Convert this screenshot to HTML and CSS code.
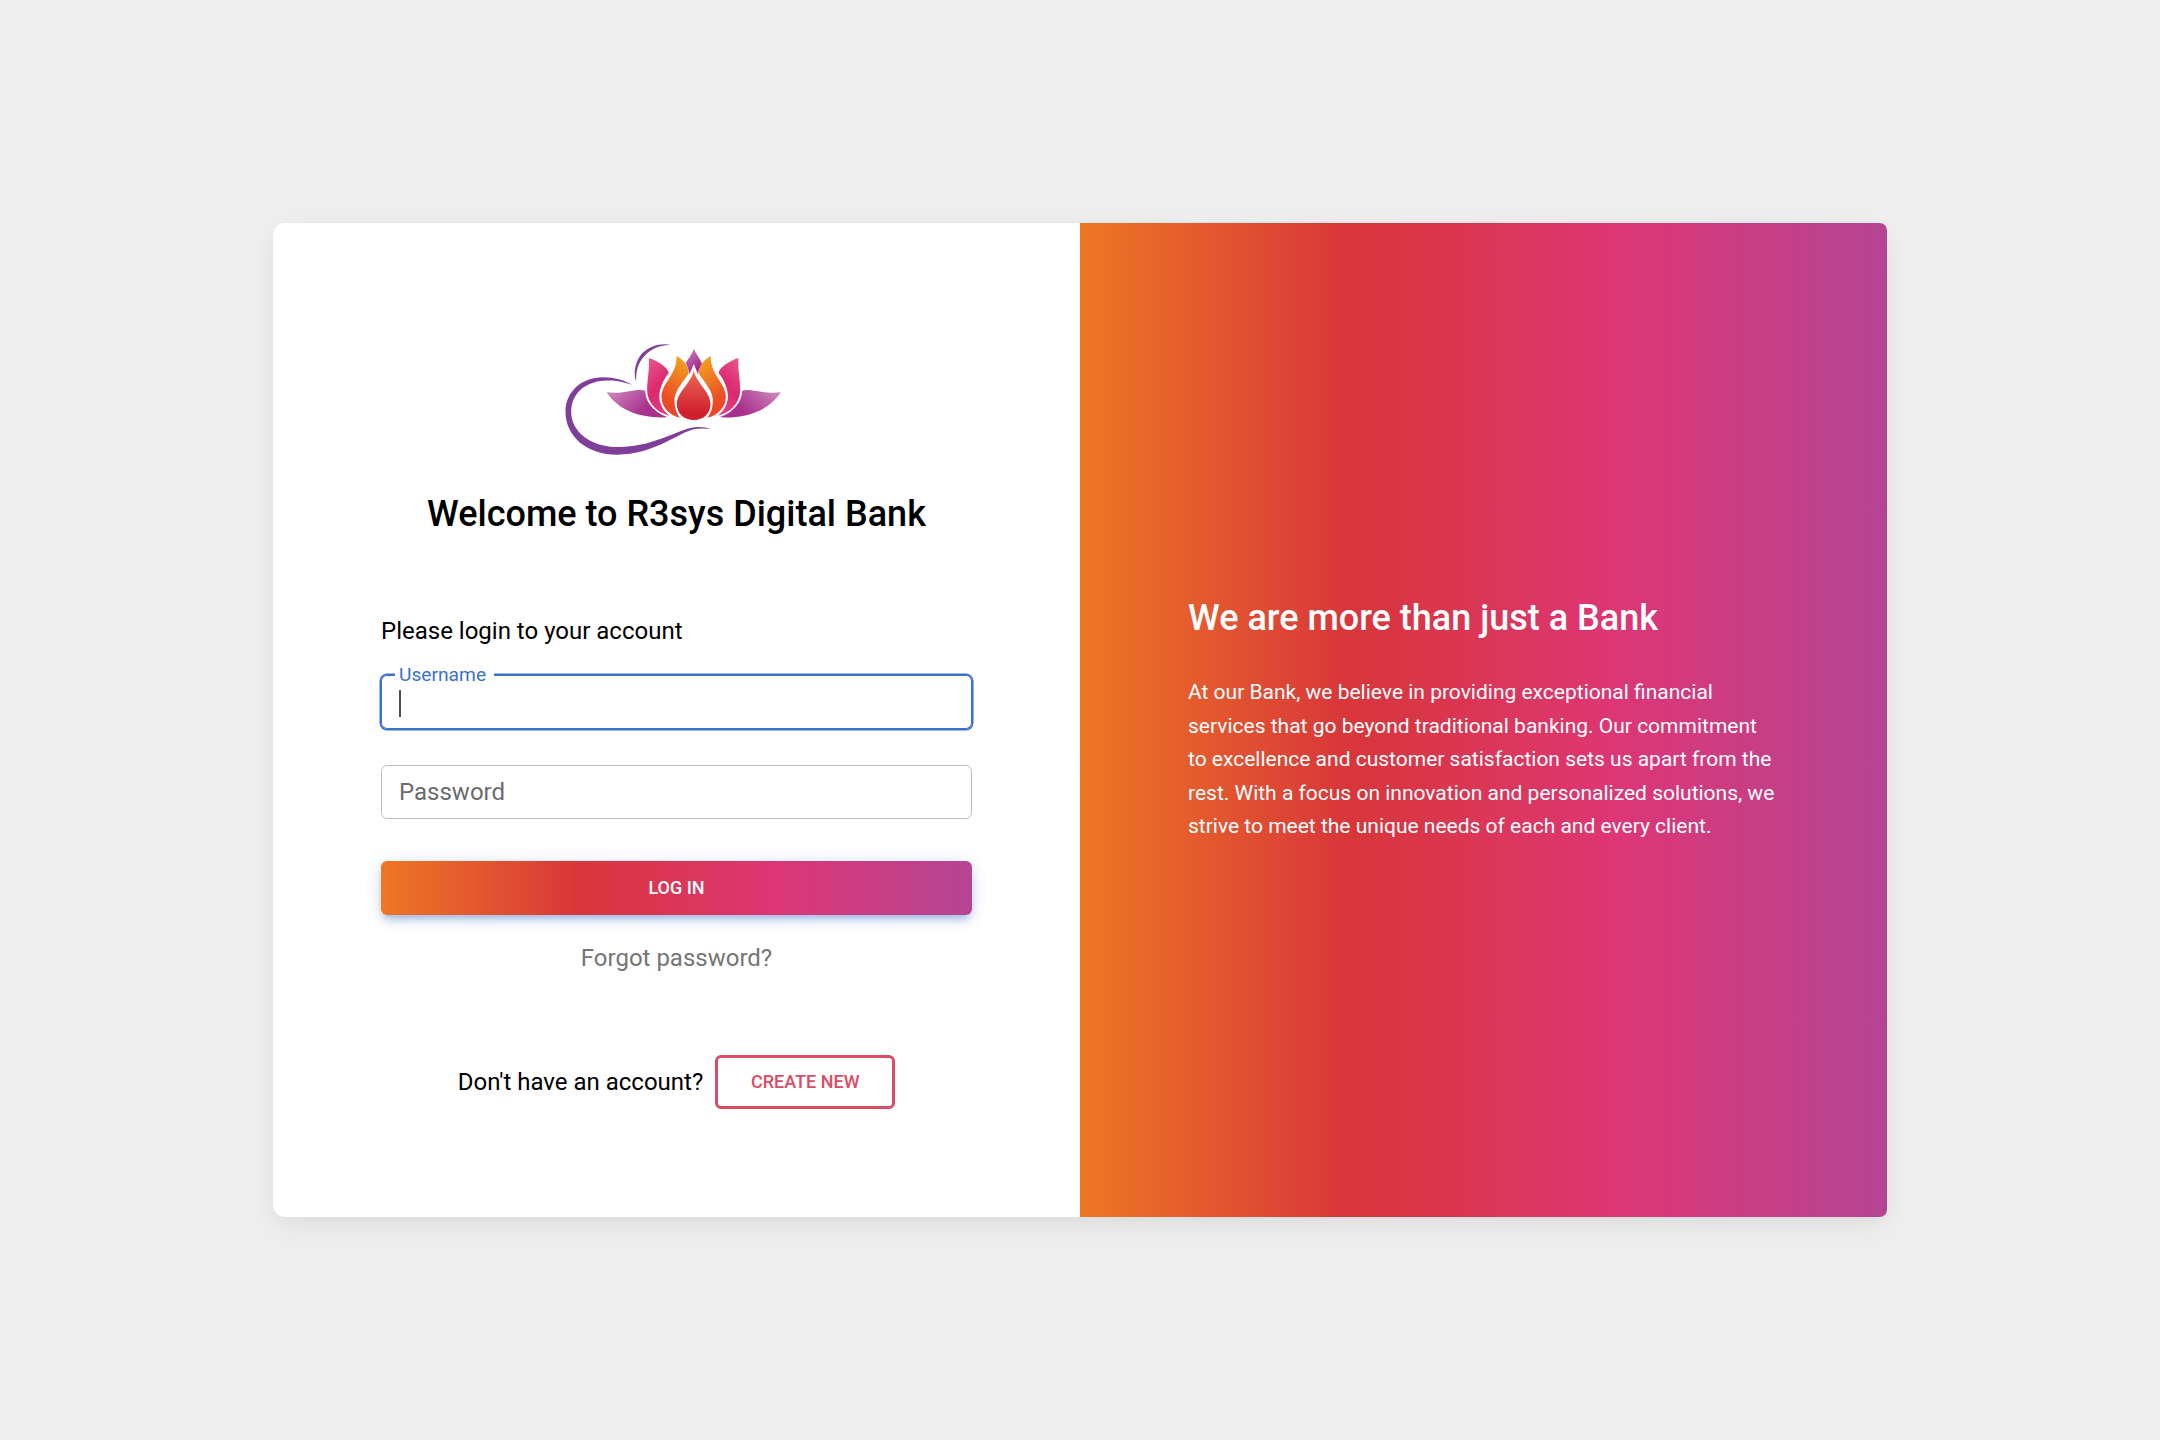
FILE: index.html
```html
<!DOCTYPE html>
<html lang="en">
<head>
<meta charset="utf-8">
<title>R3sys Digital Bank</title>
<link rel="stylesheet" href="styles.css">
</head>
<body>
<main class="card">
  <section class="login">
    <svg class="logo" viewBox="4.5 0 750 420" role="img" aria-label="Lotus logo">
      <defs>
        <linearGradient id="leaf" x1="0" y1="0" x2="1" y2=".5"><stop offset="0" stop-color="#cf8fc0"/><stop offset=".8" stop-color="#a9308d"/></linearGradient>
        <linearGradient id="pink" x1="0" y1="0" x2=".4" y2="1"><stop offset="0" stop-color="#e85a8c"/><stop offset=".6" stop-color="#dc2870"/><stop offset="1" stop-color="#e03a80"/></linearGradient>
        <linearGradient id="orange" x1=".7" y1="0" x2=".4" y2="1"><stop offset="0" stop-color="#f3a31e"/><stop offset=".75" stop-color="#ec4e27"/><stop offset="1" stop-color="#ec4427"/></linearGradient>
        <linearGradient id="red" x1="0" y1="0" x2="0" y2="1"><stop offset="0" stop-color="#ea6a55"/><stop offset=".85" stop-color="#d0202f"/></linearGradient>
        <linearGradient id="tip" x1="0" y1="0" x2=".5" y2="1"><stop offset="0" stop-color="#cd8abf"/><stop offset=".9" stop-color="#a52a8b"/></linearGradient>
        <g id="side">
          <path fill="url(#leaf)" d="M168 187C210 192 240 182 262 180Q275 179 284 182C285 215 305 243 352 262C270 266 205 242 168 187Z"/>
          <path fill="url(#pink)" d="M295 84C325 94 350 112 355 128C330 160 321 195 330 220C336 238 346 249 358 257C320 248 293 220 290 185C289 150 298 120 295 84Z"/>
          <path fill="url(#orange)" d="M378 78C400 90 412 105 415 130C395 160 370 185 372 215C373 235 378 250 388 263C355 255 333 230 333 200C333 160 382 130 378 78Z"/>
        </g>
      </defs>
      <path fill="#7f3f98" d="M245 165C215 145 165 137 130 145C80 155 45 195 45 245C45 320 110 374 200 374C310 374 380 310 430 298C450 294 465 295 480 298C462 290 440 290 420 294C370 306 300 351 205 351C120 351 62 305 62 245C62 190 105 155 160 152C195 150 220 156 245 165Z"/>
      <path fill="#7f3f98" d="M257 156C248 130 253 95 275 70C300 45 330 39 360 44C325 46 300 57 281 79C262 100 256 125 257 156Z"/>
      <use href="#side"/>
      <use href="#side" transform="translate(859 0) scale(-1 1)"/>
      <path fill="url(#tip)" d="M430 57C438 75 449 86 454 100C448 112 444 122 442 132C438 122 434 112 430 102C426 112 421 122 417 132C415 122 411 110 406 100C411 87 422 78 430 57Z"/>
      <path fill="url(#red)" d="M430 122C435 155 480 185 480 222C480 250 460 270 430 270C400 270 379 250 379 222C379 185 425 155 430 122Z"/>
    </svg>
    <h1 class="title">Welcome to R3sys Digital Bank</h1>
    <form class="form">
      <p class="prompt">Please login to your account</p>
      <div class="field field-active">
        <span class="field-label">Username</span>
        <span class="caret"></span>
      </div>
      <div class="field">Password</div>
      <button class="submit" type="button">LOG IN</button>
      <a class="forgot">Forgot password?</a>
      <div class="signup">
        <p class="signup-text">Don't have an account?</p>
        <button class="create" type="button">CREATE NEW</button>
      </div>
    </form>
  </section>
  <section class="about">
    <h2 class="about-title">We are more than just a Bank</h2>
    <p class="about-text">At our Bank, we believe in providing exceptional financial services that go beyond traditional banking. Our commitment to excellence and customer satisfaction sets us apart from the rest. With a focus on innovation and personalized solutions, we strive to meet the unique needs of each and every client.</p>
  </section>
</main>
</body>
</html>
```
FILE: styles.css
```css
* { box-sizing: border-box; }

body {
  margin: 0;
  min-height: 100vh;
  display: flex;
  align-items: center;
  justify-content: center;
  background: #eee;
  color: #000;
  font: 400 24px/38.4px Roboto, sans-serif;
}

h1, h2, p { margin: 0; }

.card {
  display: grid;
  grid-template-columns: 1fr 1fr;
  width: 1614px;
  height: 994px;
  background: #fff;
  border-radius: 12px 7.2px 7.2px 12px;
  box-shadow: 0 3px 22.5px -4.5px rgba(0, 0, 0, .07), 0 15px 30px -3px rgba(0, 0, 0, .04);
}

.login {
  display: flex;
  flex-direction: column;
  padding: 107px 108px 0;
}

.logo {
  width: 250px;
  height: 140px;
  align-self: center;
}

.title, .about-title {
  font-size: 36px;
  font-weight: 500;
  line-height: 43.2px;
}

.title {
  margin-top: 23px;
  text-align: center;
}

.form {
  display: flex;
  flex-direction: column;
  margin-top: 76.2px;
}

.prompt { margin-bottom: 24.2px; }

.field {
  position: relative;
  height: 54px;
  margin-bottom: 36px;
  padding: 7px 17px;
  border: 1px solid #bdbdbd;
  border-radius: 6px;
  color: #6b6b6b;
}

.field-active {
  padding: 7px 18px;
  border: 0;
  box-shadow: 0 0 0 1.5px #3b71ca, inset 0 0 0 1px #3b71ca;
}

.field-label {
  position: absolute;
  left: 14px;
  top: -15px;
  width: 99px;
  padding-left: 4px;
  background: #fff;
  color: #3b71ca;
  font-size: 19.2px;
  line-height: 30px;
}

.caret {
  display: block;
  width: 2px;
  height: 29px;
  margin-top: 6px;
  background: #4f4f4f;
}

.submit, .create {
  height: 54px;
  border: 0;
  border-radius: 6px;
  font: 500 18px/27px Roboto, sans-serif;
}

.submit, .about {
  background: linear-gradient(to right, #ee7724, #d8363a, #dd3675, #b44593);
  color: #fff;
}

.submit {
  margin: 6px 0 23.6px;
  box-shadow: 0 6px 10px -3px rgba(59, 113, 202, .5), 0 2px 18px 0 rgba(59, 113, 202, .18);
}

.forgot {
  text-align: center;
  color: #757575;
}

.signup {
  display: flex;
  align-items: center;
  justify-content: center;
  gap: 12px;
  margin-top: 78px;
}

.create {
  width: 180px;
  padding: 0;
  border: 3px solid #dc4c64;
  background: #fff;
  color: #dc4c64;
}

.about {
  display: flex;
  flex-direction: column;
  justify-content: center;
  gap: 36px;
  padding: 1px 108px 0;
  border-radius: 0 7.2px 7.2px 0;
}

.about-text {
  font-size: 21px;
  line-height: 33.6px;
}
```
